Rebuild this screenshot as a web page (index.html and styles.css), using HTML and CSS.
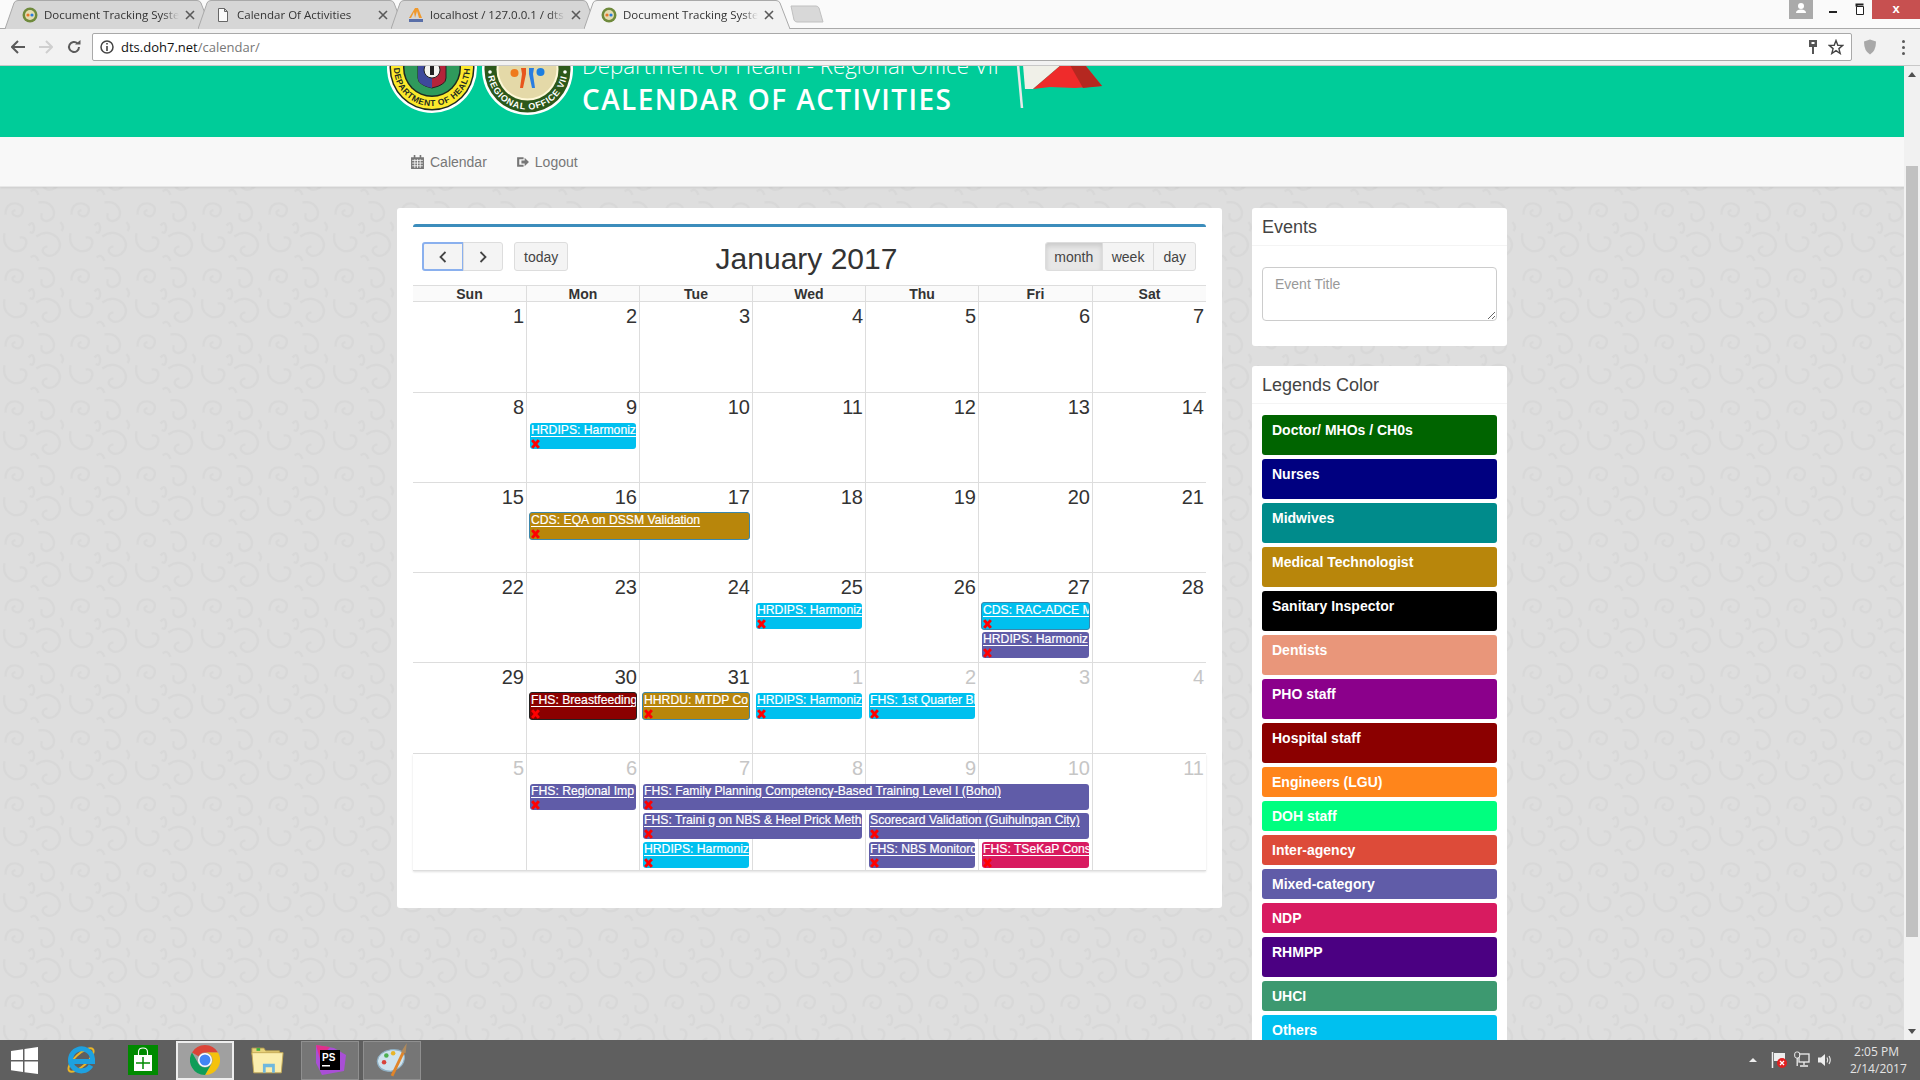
FILE: index.html
```html
<!DOCTYPE html>
<html lang="en">
<head>
<meta charset="utf-8">
<title>Calendar Of Activities</title>
<link rel="stylesheet" href="styles.css">
</head>
<body>
<svg class="defs" width="0" height="0" aria-hidden="true">
  <defs>
    <symbol id="tabshape" viewBox="0 0 206 29" preserveAspectRatio="none"><path d="M0 29 L9 3 Q10 .5 13 .5 H192 Q195 .5 196 3 L206 29"/></symbol>
    <symbol id="seal" viewBox="0 0 16 16"><circle cx="8" cy="8" r="7.5" fill="#6f8a3c"/><circle cx="8" cy="8" r="5" fill="#e4dcb0"/><circle cx="6" cy="8" r="1.6" fill="#e8762a"/><circle cx="10" cy="8" r="1.6" fill="#2a7de0"/></symbol>
    <symbol id="closex" viewBox="0 0 10 10"><path d="M1 1 L9 9 M9 1 L1 9" stroke="#5a5a5a" stroke-width="1.6" fill="none"/></symbol>
    <symbol id="cross" viewBox="0 0 8 9"><path d="M1 1 L7 8 M7 1 L1 8" stroke="#f00" stroke-width="2.7" fill="none"/></symbol>
  </defs>
</svg>

<header class="chrome">
  <div class="tabstrip">
    <div class="tab"><svg class="tabshape"><use href="#tabshape"/></svg><svg class="fav"><use href="#seal"/></svg><span class="tabtitle">Document Tracking Syste</span><svg class="tabx"><use href="#closex"/></svg></div>
    <div class="tab"><svg class="tabshape"><use href="#tabshape"/></svg><svg class="fav" viewBox="0 0 16 16"><path d="M3.5 1.5 H9.5 L12.5 4.5 V14.5 H3.5 Z M9.5 1.5 V4.5 H12.5" fill="#fafafa" stroke="#666"/></svg><span class="tabtitle">Calendar Of Activities</span><svg class="tabx"><use href="#closex"/></svg></div>
    <div class="tab"><svg class="tabshape"><use href="#tabshape"/></svg><svg class="fav" viewBox="0 0 16 16"><path d="M1 11 L7 1 H10 L14 11 H11 L9 4 L7 11 L6 5 L3 11 Z" fill="#f0992d"/><path d="M1 12 H15 V15 H1 Z" fill="#5a6fa8"/></svg><span class="tabtitle">localhost / 127.0.0.1 / dts</span><svg class="tabx"><use href="#closex"/></svg></div>
    <div class="tab active"><svg class="tabshape"><use href="#tabshape"/></svg><svg class="fav"><use href="#seal"/></svg><span class="tabtitle">Document Tracking Syste</span><svg class="tabx"><use href="#closex"/></svg></div>
    <svg class="newtab" viewBox="0 0 34 18"><path d="M1 1 H26 Q28 1 29 3 L33 17 H7 Q5 17 4 15 Z" fill="#d8d8d8" stroke="#c0c0c0"/></svg>
    <div class="winctl">
      <div class="profile"><svg viewBox="0 0 24 19" width="24" height="19"><circle cx="12" cy="6" r="3" fill="#fff"/><path d="M7 13 Q7 9.500 12 9.500 Q17 9.500 17 13 Z" fill="#fff"/></svg></div>
      <div class="winbtn"><svg viewBox="0 0 26 19" width="26" height="19"><path d="M9 11 H17 V13 H9 Z" fill="#222"/></svg></div>
      <div class="winbtn"><svg viewBox="0 0 26 19" width="26" height="19"><path d="M10.500 6.500 H17.500 V14.500 H10.500 Z" fill="#fff" stroke="#222"/><path d="M10.500 6.500 V4.500 H17.500" fill="none" stroke="#222" stroke-width="2"/></svg></div>
      <div class="winclose">x</div>
    </div>
  </div>
  <div class="toolbar">
    <svg class="navicon" viewBox="0 0 14 14"><path d="M7 1 L1 7 L7 13 M1 7 H14" stroke="#5a5a5a" stroke-width="2" fill="none"/></svg>
    <svg class="navicon" viewBox="0 0 14 14"><path d="M7 1 L13 7 L7 13 M13 7 H0" stroke="#cfcfcf" stroke-width="2" fill="none"/></svg>
    <svg class="navicon" viewBox="0 0 14 14"><path d="M12 7 A5 5 0 1 1 10.500 3.400" stroke="#5a5a5a" stroke-width="2" fill="none"/><path d="M8 4.500 H13.500 V0 Z" fill="#5a5a5a"/></svg>
    <div class="omnibox">
      <svg class="infoicon" viewBox="0 0 14 14"><circle cx="7" cy="7" r="6" fill="none" stroke="#444" stroke-width="1.500"/><path d="M6.200 6 H7.800 V11 H6.200 Z M6.200 3 H7.800 V4.600 H6.200 Z" fill="#444"/></svg>
      <span class="url">dts.doh7.net<span class="urlpath">/calendar/</span></span>
      <svg class="keyicon" viewBox="0 0 10 16"><path d="M1 1 H9 V8 H6 V15 H4 V8 H1 Z" fill="#555"/><path d="M3.500 3 H6.500 V5 H3.500 Z" fill="#fff"/></svg>
      <svg class="staricon" viewBox="0 0 16 16"><path d="M8 1.500 L9.800 6.200 L14.800 6.400 L10.900 9.600 L12.200 14.500 L8 11.700 L3.800 14.500 L5.100 9.600 L1.200 6.400 L6.200 6.200 Z" fill="none" stroke="#444" stroke-width="1.400"/></svg>
    </div>
    <svg class="shieldicon" viewBox="0 0 14 16"><path d="M7 .5 L13 2.500 Q13 12 7 15.500 Q1 12 1 2.500 Z" fill="#a8a8a8"/></svg>
    <div class="kebab"><i></i><i></i><i></i></div>
  </div>
</header>

<div class="viewport">
  <div class="page">
    <div class="banner">
      <div class="banner-inner">
        <svg class="seal seal-doh" viewBox="0 0 90 90">
          <defs><path id="arcA" d="M7 45 A38 38 0 0 0 83 45"/></defs>
          <circle cx="45" cy="45" r="45" fill="#fff"/>
          <circle cx="45" cy="45" r="42.500" fill="#1d2a20"/>
          <circle cx="45" cy="45" r="41" fill="#fce92c"/>
          <circle cx="45" cy="45" r="29" fill="#1d2a20"/>
          <circle cx="45" cy="45" r="27.500" fill="#2f9a5c"/>
          <path d="M31 40 H59 V55 Q59 62 45 65 Q31 62 31 55 Z" fill="#b3243a" stroke="#222"/>
          <path d="M31 40 H45 V65 Q31 62 31 55 Z" fill="#3e4a9c"/>
          <circle cx="45" cy="47" r="8" fill="#f3f3ef" stroke="#222"/>
          <path d="M43 42 H47 V52 H43 Z" fill="#222"/>
          <text class="seal-text dark"><textPath href="#arcA" startOffset="50%" text-anchor="middle">DEPARTMENT OF HEALTH</textPath></text>
        </svg>
        <svg class="seal seal-ro" viewBox="0 0 91 91">
          <defs><path id="arcB" d="M5.500 45.500 A40 40 0 0 0 85.500 45.500"/></defs>
          <circle cx="45.500" cy="45.500" r="45.500" fill="#fff"/>
          <circle cx="45.500" cy="45.500" r="43" fill="#2c581a"/>
          <circle cx="45.500" cy="45.500" r="31" fill="#fff8d8"/>
          <circle cx="45.500" cy="45.500" r="29" fill="#e4d9a8"/>
          <circle cx="32.500" cy="49" r="4" fill="#ef7a1c"/>
          <circle cx="58.500" cy="48" r="4" fill="#1d7fe0"/>
          <path d="M39 44 H44 V50 L41 64 H38 L40 50 Z" fill="#e8561c"/>
          <path d="M47 44 H52 L51 50 L53 64 H50 L47 50 Z" fill="#2a7de0"/>
          <circle cx="8" cy="48" r="1.800" fill="#fff"/>
          <circle cx="83" cy="48" r="1.800" fill="#fff"/>
          <text class="seal-text light"><textPath href="#arcB" startOffset="50%" text-anchor="middle">REGIONAL OFFICE VII</textPath></text>
        </svg>
        <div class="banner-title">
          <div class="banner-sub">Department of Health - Regional Office VII</div>
          <div class="banner-main">CALENDAR OF ACTIVITIES</div>
        </div>
        <svg class="flag" viewBox="0 0 90 44">
          <path d="M3 0 L7 43" stroke="#e8e8e8" stroke-width="2.500"/>
          <path d="M8 0 L46 0 L18 24 L10 24 Z" fill="#f0f0e8"/>
          <path d="M60 0 H72 L70 4 H56 Z" fill="#5a6fc0"/>
          <path d="M18 24 L46 0 H70 L87 21 L60 23 L35 22 Z" fill="#ef2b2b"/>
          <path d="M55 0 H70 L87 21 L68 23 Z" fill="#b52820"/>
        </svg>
      </div>
    </div>

    <nav class="navbar">
      <div class="container">
        <a class="navlink"><svg class="navglyph" viewBox="0 0 12 13"><path d="M0 2 H12 V13 H0 Z M2.500 0 H4 V2 H2.500 Z M8 0 H9.500 V2 H8 Z" fill="#777"/><path d="M1 5 H11 M1 7.500 H11 M1 10 H11 M3.500 4 V12 M6 4 V12 M8.500 4 V12" stroke="#f8f8f8" stroke-width=".8"/></svg>Calendar</a>
        <a class="navlink"><svg class="navglyph" viewBox="0 0 12 13"><path d="M1 2 H7 V4 H3 V9 H7 V11 H1 Z" fill="#777"/><path d="M5 5 H8 V2.500 L12 6.500 L8 10.500 V8 H5 Z" fill="#777"/></svg>Logout</a>
      </div>
    </nav>

    <main class="container content">
      <section class="card main-card">
        <div class="calendar">
          <div class="cal-toolbar">
            <div class="btn-groups">
              <div class="btn-group">
                <button class="btn focus"><svg class="chev" viewBox="0 0 8 12"><path d="M6.500 1 L1.500 6 L6.500 11" fill="none" stroke="#444" stroke-width="1.800"/></svg></button>
                <button class="btn"><svg class="chev" viewBox="0 0 8 12"><path d="M1.500 1 L6.500 6 L1.500 11" fill="none" stroke="#444" stroke-width="1.800"/></svg></button>
              </div>
              <button class="btn">today</button>
            </div>
            <h2 class="cal-title">January 2017</h2>
            <div class="btn-group">
              <button class="btn on">month</button>
              <button class="btn">week</button>
              <button class="btn">day</button>
            </div>
          </div>

          <div class="dow">
            <div>Sun</div><div>Mon</div><div>Tue</div><div>Wed</div><div>Thu</div><div>Fri</div><div>Sat</div>
          </div>

          <div class="week w91">
            <div class="day">1</div><div class="day">2</div><div class="day">3</div><div class="day">4</div><div class="day">5</div><div class="day">6</div><div class="day">7</div>
          </div>

          <div class="week">
            <div class="day">8</div><div class="day">9</div><div class="day">10</div><div class="day">11</div><div class="day">12</div><div class="day">13</div><div class="day">14</div>
            <div class="ev c2 sky"><a>HRDIPS: Harmoniz</a><svg class="evx"><use href="#cross"/></svg></div>
          </div>

          <div class="week">
            <div class="day">15</div><div class="day">16</div><div class="day">17</div><div class="day">18</div><div class="day">19</div><div class="day">20</div><div class="day">21</div>
            <div class="ev c2 s2 gold bordered"><a>CDS: EQA on DSSM Validation</a><svg class="evx"><use href="#cross"/></svg></div>
          </div>

          <div class="week">
            <div class="day">22</div><div class="day">23</div><div class="day">24</div><div class="day">25</div><div class="day">26</div><div class="day">27</div><div class="day">28</div>
            <div class="ev c4 sky"><a>HRDIPS: Harmoniz</a><svg class="evx"><use href="#cross"/></svg></div>
            <div class="ev c6 sky bordered"><a>CDS: RAC-ADCE M</a><svg class="evx"><use href="#cross"/></svg></div>
            <div class="ev c6 r3 mix"><a>HRDIPS: Harmoniz</a><svg class="evx"><use href="#cross"/></svg></div>
          </div>

          <div class="week w91">
            <div class="day">29</div><div class="day">30</div><div class="day">31</div><div class="day other">1</div><div class="day other">2</div><div class="day other">3</div><div class="day other">4</div>
            <div class="ev c2 maroon bordered dark"><a>FHS: Breastfeeding</a><svg class="evx"><use href="#cross"/></svg></div>
            <div class="ev c3 gold bordered"><a>HHRDU: MTDP Co</a><svg class="evx"><use href="#cross"/></svg></div>
            <div class="ev c4 sky"><a>HRDIPS: Harmoniz</a><svg class="evx"><use href="#cross"/></svg></div>
            <div class="ev c5 sky"><a>FHS: 1st Quarter Bl</a><svg class="evx"><use href="#cross"/></svg></div>
          </div>

          <div class="week tall">
            <div class="day other">5</div><div class="day other">6</div><div class="day other">7</div><div class="day other">8</div><div class="day other">9</div><div class="day other">10</div><div class="day other">11</div>
            <div class="ev c2 mix"><a>FHS: Regional Imp</a><svg class="evx"><use href="#cross"/></svg></div>
            <div class="ev c3 s4 mix"><a>FHS: Family Planning Competency-Based Training Level I (Bohol)</a><svg class="evx"><use href="#cross"/></svg></div>
            <div class="ev c3 s2 r3 mix"><a>FHS: Traini g on NBS &amp; Heel Prick Meth</a><svg class="evx"><use href="#cross"/></svg></div>
            <div class="ev c5 s2 r3 mix"><a>Scorecard Validation (Guihulngan City)</a><svg class="evx"><use href="#cross"/></svg></div>
            <div class="ev c3 r4 sky"><a>HRDIPS: Harmoniz</a><svg class="evx"><use href="#cross"/></svg></div>
            <div class="ev c5 r4 mix"><a>FHS: NBS Monitorc</a><svg class="evx"><use href="#cross"/></svg></div>
            <div class="ev c6 r4 crimson"><a>FHS: TSeKaP Cons</a><svg class="evx"><use href="#cross"/></svg></div>
          </div>
        </div>
      </section>

      <aside class="sidebar">
        <section class="card side-card">
          <h3 class="side-head">Events</h3>
          <div class="side-body events-body">
            <textarea class="event-input" placeholder="Event Title"></textarea>
          </div>
        </section>
        <section class="card side-card">
          <h3 class="side-head">Legends Color</h3>
          <div class="side-body legends">
            <div class="legend big l-doc">Doctor/ MHOs / CH0s</div>
            <div class="legend big l-nurse">Nurses</div>
            <div class="legend big l-mid">Midwives</div>
            <div class="legend big gold">Medical Technologist</div>
            <div class="legend big l-san">Sanitary Inspector</div>
            <div class="legend big l-den">Dentists</div>
            <div class="legend big l-pho">PHO staff</div>
            <div class="legend big maroon">Hospital staff</div>
            <div class="legend l-eng">Engineers (LGU)</div>
            <div class="legend l-doh">DOH staff</div>
            <div class="legend l-int">Inter-agency</div>
            <div class="legend mix">Mixed-category</div>
            <div class="legend crimson">NDP</div>
            <div class="legend big l-rh">RHMPP</div>
            <div class="legend l-uh">UHCI</div>
            <div class="legend sky">Others</div>
          </div>
        </section>
      </aside>
    </main>
  </div>
  <div class="scrollbar">
    <svg class="arrow" viewBox="0 0 16 16"><path d="M4 11 L8 6 L12 11 Z" fill="#505050"/></svg>
    <div class="thumb"></div>
    <svg class="arrow bottom" viewBox="0 0 16 16"><path d="M4 5 L8 10 L12 5 Z" fill="#505050"/></svg>
  </div>
</div>

<footer class="taskbar">
  <svg class="tb-start" viewBox="0 0 27 27"><path d="M0 4 L12 2.300 V13 H0 Z M13.500 2 L27 0 V13 H13.500 Z M0 14.500 H12 V25 L0 23.300 Z M13.500 14.500 H27 V27 L13.500 25.200 Z" fill="#fff"/></svg>
  <svg class="tb-ie" viewBox="0 0 30 30"><ellipse cx="15" cy="15" rx="16" ry="6" transform="rotate(-42 15 15)" fill="none" stroke="#e8b52a" stroke-width="2"/><path d="M25 20.500 A11 11 0 1 1 26.500 14 V16.500 H7" fill="none" stroke="#1ea1e0" stroke-width="5"/></svg>
  <svg class="tb-store" viewBox="0 0 30 30"><rect width="30" height="30" fill="#008a00"/><path d="M6 10 H24 V26 H6 Z" fill="#fff"/><path d="M10.500 10 V7 Q10.500 3 15 3 Q19.500 3 19.500 7 V10" fill="none" stroke="#fff" stroke-width="1.100"/><path d="M15 12 V24 M8 18 H22" stroke="#008a00" stroke-width="1.500"/></svg>
  <div class="tb-btn lit"><svg viewBox="0 0 30 30" width="30" height="30"><path d="M15 0 A15 15 0 0 1 28 7.500 H15 A7.500 7.500 0 0 0 8.500 11.300 L2 7.500 A15 15 0 0 1 15 0 Z" fill="#db4437"/><path d="M28 7.500 A15 15 0 0 1 15 30 L21.500 18.800 A7.500 7.500 0 0 0 15 7.500 Z" fill="#f4c20d"/><path d="M15 30 A15 15 0 0 1 2 7.500 L8.500 18.800 A7.500 7.500 0 0 0 21.500 18.800 Z" fill="#0f9d58"/><circle cx="15" cy="15" r="7" fill="#fff"/><circle cx="15" cy="15" r="5.500" fill="#4285f4"/></svg></div>
  <svg class="tb-folder" viewBox="0 0 36 32"><path d="M1 3 H14 L16 6 H31 V10 H1 Z" fill="#e8d27a" stroke="#b49b4c"/><path d="M1 8 H35 L33 30 H3 Z" fill="#fbeeae" stroke="#c4aa55"/><path d="M6 3 H10 V6 H6 Z" fill="#3db03d"/><path d="M13 20 H26 V30 H23 V24 H16 V30 H13 Z" fill="#6fb8de"/></svg>
  <div class="tb-btn dim"><svg viewBox="0 0 32 30" width="32" height="30"><path d="M2 0 L20 3 L32 10 L30 26 L8 30 L2 18 Z" fill="#a94fd6"/><path d="M2 0 L16 2 L6 14 Z" fill="#e0308a"/><rect x="6" y="5" width="20" height="20" fill="#000"/><text class="ps-text" x="8" y="16">PS</text><rect x="8" y="20" width="8" height="1.500" fill="#fff"/></svg></div>
  <div class="tb-btn dim"><svg viewBox="0 0 30 30" width="34" height="34"><path d="M2 16 Q3 8 14 6 Q25 5 26 12 Q26 22 14 25 Q3 25 2 16 Z" fill="#cfe3ee" stroke="#8fb0c4"/><circle cx="8" cy="17" r="2" fill="#d8433b"/><circle cx="10" cy="11" r="2" fill="#4cb050"/><circle cx="16" cy="9" r="2" fill="#e8b52a"/><path d="M15 29 L25 8" stroke="#e0852a" stroke-width="2.500"/><path d="M23 8 L28 0 L27 9 Z" fill="#b08a5c"/></svg></div>
  <div class="tray">
    <svg class="tray-up" viewBox="0 0 10 6"><path d="M1 5 L5 1 L9 5 Z" fill="#eee"/></svg>
    <svg class="tray-ic" viewBox="0 0 16 18"><path d="M1.500 1 V17" stroke="#eee" stroke-width="1.500"/><path d="M3 2 H14 V10 H3 Z" fill="#eee"/><circle cx="11" cy="12" r="5" fill="#e02020"/><path d="M9 10 L13 14 M13 10 L9 14" stroke="#fff" stroke-width="1.300"/></svg>
    <svg class="tray-ic" viewBox="0 0 16 18"><rect x="5" y="3" width="10" height="8" fill="none" stroke="#eee" stroke-width="1.300"/><path d="M10 11 V14 M6 15 H14" stroke="#eee" stroke-width="1.300"/><rect x=".7" y="1" width="5" height="6" rx="2" fill="#5f5f5f" stroke="#eee"/><path d="M3.200 7 V15" stroke="#eee" stroke-width="1.300"/></svg>
    <svg class="tray-ic" viewBox="0 0 16 18"><path d="M1 6.500 H4 L8 3 V15 L4 11.500 H1 Z" fill="#eee"/><path d="M10 6.500 Q11.500 9 10 11.500 M12 5 Q14.500 9 12 13" fill="none" stroke="#eee" stroke-width="1.100"/></svg>
    <div class="clock"><div>2:05 PM</div><div>2/14/2017</div></div>
  </div>
</footer>
</body>
</html>
```
FILE: styles.css
```css
* { box-sizing: border-box; }
html, body { height: 100%; }
body {
  margin: 0;
  width: 1920px;
  height: 1080px;
  overflow: hidden;
  display: flex;
  flex-direction: column;
  font-family: "Liberation Sans", Arial, sans-serif;
  font-size: 14px;
  color: #333;
  background: #ddd;
}
.defs { position: absolute; }
svg { display: block; flex: none; }

/* browser chrome */
.chrome { flex: none; height: 66px; }
.tabstrip {
  height: 29px;
  display: flex;
  background: #fafafa;
  border-bottom: 1px solid #a9a9a9;
  padding-left: 5px;
}
.tab {
  position: relative;
  width: 206px;
  height: 29px;
  margin-right: -13px;
  padding: 0 16px 0 17px;
  display: flex;
  align-items: center;
  gap: 6px;
  fill: #d6d6d6;
  stroke: #a9a9a9;
}
.tab.active { fill: #f2f2f2; z-index: 2; }
.tabshape { position: absolute; left: 0; top: 0; width: 206px; height: 29px; }
.fav, .tabtitle, .tabx { position: relative; }
.fav { width: 16px; height: 16px; fill: none; stroke: none; }
.tabtitle {
  flex: 1;
  min-width: 0;
  font: 11.500px "Open Sans", sans-serif;
  color: #333;
  white-space: nowrap;
  overflow: hidden;
  -webkit-mask-image: linear-gradient(to right, #000 88%, transparent);
  mask-image: linear-gradient(to right, #000 88%, transparent);
}
.tabx { width: 10px; height: 10px; stroke: none; fill: none; }
.newtab { width: 34px; height: 18px; margin: 5px 0 0 13px; z-index: 1; }
.winctl { margin-left: auto; display: flex; height: 19px; }
.profile { width: 24px; height: 19px; background: #aaa; margin-right: 7px; }
.winbtn { width: 26px; height: 19px; }
.winclose {
  width: 48px;
  height: 19px;
  background: #c75050;
  color: #fff;
  font-size: 13px;
  font-weight: bold;
  line-height: 17px;
  text-align: center;
}
.toolbar {
  height: 37px;
  display: flex;
  align-items: center;
  gap: 14px;
  padding-left: 11px;
  background: #f2f2f2;
  border-bottom: 1px solid #c8c8c8;
}
.navicon { width: 14px; height: 14px; }
.omnibox {
  width: 1760px;
  height: 28px;
  margin-left: -3px;
  display: flex;
  align-items: center;
  background: #fff;
  border: 1px solid #a9a9a9;
  border-radius: 2px;
  padding: 0 7px;
}
.infoicon { width: 14px; height: 14px; margin-right: 7px; }
.url { font: 13px "Open Sans", sans-serif; color: #111; flex: 1; }
.urlpath { color: #777; }
.keyicon { width: 10px; height: 16px; margin-right: 10px; }
.staricon { width: 16px; height: 16px; }
.shieldicon { width: 14px; height: 16px; margin-left: -3px; }
.kebab { display: flex; flex-direction: column; gap: 3px; margin-left: 11px; }
.kebab i { display: block; width: 3px; height: 3px; background: #5a5a5a; border-radius: 50%; }

/* page viewport */
.viewport { flex: 1; min-height: 0; display: flex; }
.page {
  flex: 1;
  min-width: 0;
  overflow: hidden;
  background-color: #dedede;
  background-size: 66px 66px;
  background-image: url("data:image/svg+xml,%3Csvg xmlns='http://www.w3.org/2000/svg' viewBox='0 0 120 120'%3E%3Cg fill='none' stroke='black' stroke-opacity='.028' stroke-width='4'%3E%3Cpath d='M10 30 Q10 8 30 10 Q46 14 40 28 Q34 38 24 30 Q20 24 28 22'/%3E%3Cpath d='M70 8 Q92 4 98 24 Q100 40 84 42 Q72 40 76 28'/%3E%3Cpath d='M8 64 Q4 88 24 96 Q44 100 48 82 Q48 70 36 72'/%3E%3Cpath d='M66 70 Q86 56 104 72 Q116 88 100 102 Q86 110 78 98 Q76 90 86 88'/%3E%3Cpath d='M52 50 Q60 40 62 54 Q62 66 54 62'/%3E%3Cpath d='M110 44 Q118 52 112 60'/%3E%3Cpath d='M56 108 Q64 100 70 114'/%3E%3C/g%3E%3C/svg%3E");
}
.banner { height: 71px; overflow: hidden; background: #00cc99; display: flex; align-items: flex-end; }
.banner-inner { width: 1130px; margin: 0 auto; display: flex; align-items: flex-end; }
.seal { flex: none; }
.seal-doh { width: 90px; height: 90px; margin-bottom: 24px; }
.seal-ro { width: 91px; height: 91px; margin: 0 0 22px 5px; }
.seal-text { font-family: "Liberation Sans", sans-serif; font-weight: bold; font-size: 8.500px; letter-spacing: .5px; }
.seal-text.dark { fill: #1d2a20; }
.seal-text.light { fill: #fff; font-size: 9px; letter-spacing: .8px; }
.banner-title { width: 432px; margin: 0 0 19px 9px; color: #fff; }
.banner-sub { font: 300 22.300px/30px "Open Sans", sans-serif; margin-bottom: -1px; white-space: nowrap; }
.banner-main { font: 600 28px/38px "Open Sans", sans-serif; letter-spacing: 1.400px; white-space: nowrap; }
.flag { width: 90px; height: 44px; margin: 0 0 28px 1px; }

.navbar { height: 50px; background: #f8f8f8; border-bottom: 1px solid #e7e7e7; box-shadow: 0 1px 2px rgba(0,0,0,.08); }
.container { width: 1110px; margin: 0 auto; }
.navbar .container { display: flex; height: 100%; padding-left: 14px; }
.navlink { display: flex; align-items: center; gap: 6px; color: #777; padding-right: 29px; }
.navglyph { width: 13px; height: 14px; }

.content { display: flex; align-items: flex-start; gap: 30px; padding-top: 21px; }
.card { background: #fff; border-radius: 3px; }
.main-card { width: 825px; height: 700px; padding: 16px; flex: none; }
.calendar { border-top: 3px solid #3c8dbc; border-radius: 3px; padding-top: 15px; }
.cal-toolbar { height: 29px; margin: 0 10px 14px 9px; display: flex; justify-content: space-between; align-items: center; }
.cal-title { margin: 4px 0 0; font-size: 30px; font-weight: 400; color: #333; line-height: 33px; }
.btn-groups { display: flex; gap: 11px; }
.btn-group { display: flex; }
.btn {
  height: 29px;
  padding: 0 9px;
  display: flex;
  align-items: center;
  justify-content: center;
  font: 14px "Liberation Sans", sans-serif;
  color: #444;
  background: #f4f4f4;
  border: 1px solid #ddd;
  border-radius: 3px;
}
.btn-group .btn + .btn { margin-left: -1px; border-top-left-radius: 0; border-bottom-left-radius: 0; }
.btn-group .btn:not(:last-child) { border-top-right-radius: 0; border-bottom-right-radius: 0; }
.btn.focus { width: 42px; border: 2px solid #8ab0ee; border-radius: 3px; }
.btn.focus + .btn { width: 40px; }
.btn.on { background: #e7e7e7; box-shadow: inset 0 3px 5px rgba(0,0,0,.125); width: 58px; }
.chev { width: 8px; height: 12px; }

.dow {
  display: grid;
  grid-template-columns: 113px 113px 113px 113px 113px 114px 114px;
  height: 17px;
  border-top: 1px solid #ddd;
  border-bottom: 1px solid #ddd;
  background: #fafafa;
  font-weight: bold;
  font-size: 14px;
  line-height: 17px;
  text-align: center;
}
.dow div + div { border-left: 1px solid #ddd; }
.week {
  display: grid;
  grid-template-columns: 113px 113px 113px 113px 113px 114px 114px;
  grid-template-rows: 30px 29px 29px 1fr;
  height: 90px;
  border-bottom: 1px solid #ddd;
}
.week.w91 { height: 91px; }
.week.tall { height: 117px; box-shadow: 0 1px 2px rgba(0,0,0,.12); }
.day {
  grid-row: 1 / -1;
  padding: 1px 2px 0 0;
  text-align: right;
  font-size: 20px;
  line-height: 26px;
  color: #333;
  border-left: 1px solid #ddd;
}
.day:nth-child(1) { grid-column: 1; border-left: 0; }
.day:nth-child(2) { grid-column: 2; }
.day:nth-child(3) { grid-column: 3; }
.day:nth-child(4) { grid-column: 4; }
.day:nth-child(5) { grid-column: 5; }
.day:nth-child(6) { grid-column: 6; }
.day:nth-child(7) { grid-column: 7; }
.day.other { color: #c6c6c6; }
.ev {
  grid-row: 2;
  height: 26px;
  margin: 0 3px 0 4px;
  padding: 1px 0 0 1px;
  border-radius: 3px;
  overflow: hidden;
  z-index: 1;
  color: #fff;
  font-size: 12.200px;
  line-height: 13px;
}
.ev a { display: block; white-space: nowrap; overflow: hidden; text-decoration: underline; text-underline-offset: 2px; height: 15px; -webkit-text-stroke: .2px #fff; }
.evx { width: 9px; height: 10px; margin-top: 0; }
.bordered { height: 28px; margin-top: -1px; margin-left: 3px; margin-right: 2px; border: 1px solid #3a87ad; padding-top: 1px; padding-left: 1px; }
.dark { border-color: #222; }
.r3 { grid-row: 3; }
.r4 { grid-row: 4; }
.c2 { grid-column-start: 2; }
.c3 { grid-column-start: 3; }
.c4 { grid-column-start: 4; }
.c5 { grid-column-start: 5; }
.c6 { grid-column-start: 6; }
.s2 { grid-column-end: span 2; }
.s4 { grid-column-end: span 4; }
.sky { background: #00c0ef; }
.gold { background: #b8860b; }
.mix { background: #605ca8; }
.maroon { background: #8b0000; }
.crimson { background: #d81b60; }

.sidebar { width: 255px; flex: none; display: flex; flex-direction: column; gap: 20px; }
.side-head { margin: 0; height: 38px; padding: 0 10px; font-size: 18px; font-weight: 400; line-height: 38px; color: #444; border-bottom: 1px solid #f4f4f4; }
.side-body { padding: 10px; }
.events-body { height: 100px; padding-top: 21px; }
.event-input {
  display: block;
  width: 235px;
  height: 54px;
  padding: 8px 12px 6px;
  font: 14px "Liberation Sans", sans-serif;
  border: 1px solid #ccc;
  border-radius: 4px;
  background: #fff;
  resize: vertical;
}
.event-input::placeholder { color: #999; }
.legends { display: flex; flex-direction: column; gap: 4px; padding-top: 11px; }
.legend {
  height: 30px;
  padding: 5px 10px;
  border-radius: 3px;
  color: #fff;
  font-weight: bold;
  font-size: 14px;
  line-height: 20px;
  flex: none;
}
.legend.big { height: 40px; }
.l-doc { background: #006400; }
.l-nurse { background: #000080; }
.l-mid { background: #008b8b; }
.l-san { background: #000; }
.l-den { background: #e9967a; }
.l-pho { background: #8b008b; }
.l-eng { background: #ff851b; }
.l-doh { background: #00ff7f; }
.l-int { background: #dd4b39; }
.l-rh { background: #4b0082; }
.l-uh { background: #3d9970; }

.scrollbar { width: 16px; flex: none; background: #f1f1f1; position: relative; display: flex; flex-direction: column; align-items: center; }
.arrow { width: 16px; height: 16px; }
.arrow.bottom { margin-top: auto; }
.thumb { width: 12px; height: 771px; margin-top: 84px; background: #c1c1c1; }

/* taskbar */
.taskbar {
  flex: none;
  height: 40px;
  display: flex;
  align-items: center;
  background: #5f5f5f;
  color: #e4e4e4;
}
.tb-start { width: 27px; height: 27px; margin-left: 11px; }
.tb-ie { width: 30px; height: 30px; margin-left: 28px; }
.tb-store { width: 30px; height: 30px; margin-left: 32px; }
.tb-btn { width: 58px; height: 39px; display: flex; align-items: center; justify-content: center; border: 1px solid #8f8f8f; }
.tb-btn.lit { margin-left: 18px; background: #a0a0a0; border: 2px solid #eee; }
.tb-btn.dim { background: #767676; margin-left: 4px; }
.tb-folder { width: 33px; height: 30px; margin: 0 13px 0 17px; }
.ps-text { font: bold 10px "Liberation Sans", sans-serif; fill: #fff; }
.tray { margin-left: auto; display: flex; align-items: center; }
.tray-up { width: 10px; height: 6px; margin-right: 13px; }
.tray-ic { width: 16px; height: 18px; margin-right: 7px; }
.clock { width: 70px; margin-left: 10px; padding-right: 17px; text-align: center; font-size: 12px; line-height: 17px; font-family: "Open Sans", sans-serif; white-space: nowrap; }
```
